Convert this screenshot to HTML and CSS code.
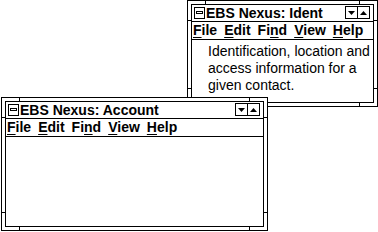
FILE: index.html
```html
<!DOCTYPE html>
<html>
<head>
<meta charset="utf-8">
<link rel="stylesheet" href="styles.css">
</head>
<body>
<div class="win ident">
  <span class="tick tt tl"></span><span class="tick tt tr"></span>
  <span class="tick tb tl"></span><span class="tick tb tr"></span>
  <span class="tick sl st"></span><span class="tick sr st"></span>
  <span class="tick sl sb"></span><span class="tick sr sb"></span>
  <div class="inner">
    <div class="title">
      <svg class="sys" width="11" height="12" viewBox="0 0 11 12"><rect x="0.5" y="0.5" width="10" height="11" fill="#fff" stroke="#000"/><rect x="2.5" y="4.5" width="6" height="2" fill="none" stroke="#000"/></svg>
      <span class="ttext">EBS Nexus: Ident</span>
      <span class="btns">
        <svg width="25" height="13" viewBox="0 0 25 13"><rect x="0.5" y="0.5" width="12" height="12" fill="#fff" stroke="#000"/><rect x="12.5" y="0.5" width="12" height="12" fill="#fff" stroke="#000"/><polygon points="3,5 10,5 6.5,9" fill="#000"/><polygon points="15,9 22,9 18.5,5" fill="#000"/></svg>
      </span>
    </div>
    <div class="menu">
      <span class="mi"><u>F</u>ile</span>
      <span class="mi"><u>E</u>dit</span>
      <span class="mi">Fi<u>n</u>d</span>
      <span class="mi"><u>V</u>iew</span>
      <span class="mi"><u>H</u>elp</span>
    </div>
    <div class="client">
      <p class="desc">Identification, location and<br>access information for a<br>given contact.</p>
    </div>
  </div>
</div>
<div class="win account">
  <span class="tick tt tl"></span><span class="tick tt tr"></span>
  <span class="tick tb tl"></span><span class="tick tb tr"></span>
  <span class="tick sl st"></span><span class="tick sr st"></span>
  <span class="tick sl sb"></span><span class="tick sr sb"></span>
  <div class="inner">
    <div class="title">
      <svg class="sys" width="11" height="12" viewBox="0 0 11 12"><rect x="0.5" y="0.5" width="10" height="11" fill="#fff" stroke="#000"/><rect x="2.5" y="4.5" width="6" height="2" fill="none" stroke="#000"/></svg>
      <span class="ttext">EBS Nexus: Account</span>
      <span class="btns">
        <svg width="25" height="13" viewBox="0 0 25 13"><rect x="0.5" y="0.5" width="12" height="12" fill="#fff" stroke="#000"/><rect x="12.5" y="0.5" width="12" height="12" fill="#fff" stroke="#000"/><polygon points="3,5 10,5 6.5,9" fill="#000"/><polygon points="15,9 22,9 18.5,5" fill="#000"/></svg>
      </span>
    </div>
    <div class="menu">
      <span class="mi"><u>F</u>ile</span>
      <span class="mi"><u>E</u>dit</span>
      <span class="mi">Fi<u>n</u>d</span>
      <span class="mi"><u>V</u>iew</span>
      <span class="mi"><u>H</u>elp</span>
    </div>
    <div class="client"></div>
  </div>
</div>
</body>
</html>
```
FILE: styles.css
```css
html, body {
  margin: 0;
  padding: 0;
}
body {
  width: 378px;
  height: 232px;
  position: relative;
  overflow: hidden;
  background: #fff;
  color: #000;
  font-family: "Liberation Sans", Arial, sans-serif;
}
.win {
  position: absolute;
  box-sizing: border-box;
  border: 1px solid #000;
  padding: 3px;
  background: #fff;
}
.ident {
  left: 187px;
  top: 0;
  width: 191px;
  height: 107px;
}
.account {
  left: 1px;
  top: 97px;
  width: 267px;
  height: 134px;
}
.tick {
  position: absolute;
  background: #000;
}
.tt, .tb { width: 1px; height: 3px; }
.tt { top: 0; }
.tb { bottom: 0; }
.tt.tl, .tb.tl { left: 17px; }
.tt.tr, .tb.tr { right: 17px; }
.sl, .sr { width: 3px; height: 1px; }
.sl { left: 0; }
.sr { right: 0; }
.st { top: 19px; }
.sb { bottom: 17px; }
.inner {
  box-sizing: border-box;
  height: 100%;
  border: 1px solid #000;
  display: flex;
  flex-direction: column;
}
.title {
  height: 16px;
  flex: none;
  border-bottom: 1px solid #000;
  display: flex;
  align-items: flex-start;
  font-weight: bold;
  font-size: 14px;
  line-height: 16px;
}
.sys {
  display: block;
  margin: 2px 0 0 2px;
  flex: none;
}
.ttext {
  margin-left: 1px;
  white-space: nowrap;
}
.btns {
  margin-left: auto;
  margin-right: 3px;
  margin-top: 1px;
  display: flex;
}
.btns svg { display: block; }
.menu {
  height: 17px;
  flex: none;
  border-bottom: 1px solid #000;
  display: flex;
  gap: 7px;
  padding-left: 1px;
  font-weight: bold;
  font-size: 14px;
  line-height: 17px;
  white-space: nowrap;
}
.menu u {
  text-underline-offset: 2px;
}
.client {
  flex: 1;
}
.desc {
  margin: 0;
  padding: 3px 0 0 16px;
  font-size: 14px;
  line-height: 17px;
}
```
